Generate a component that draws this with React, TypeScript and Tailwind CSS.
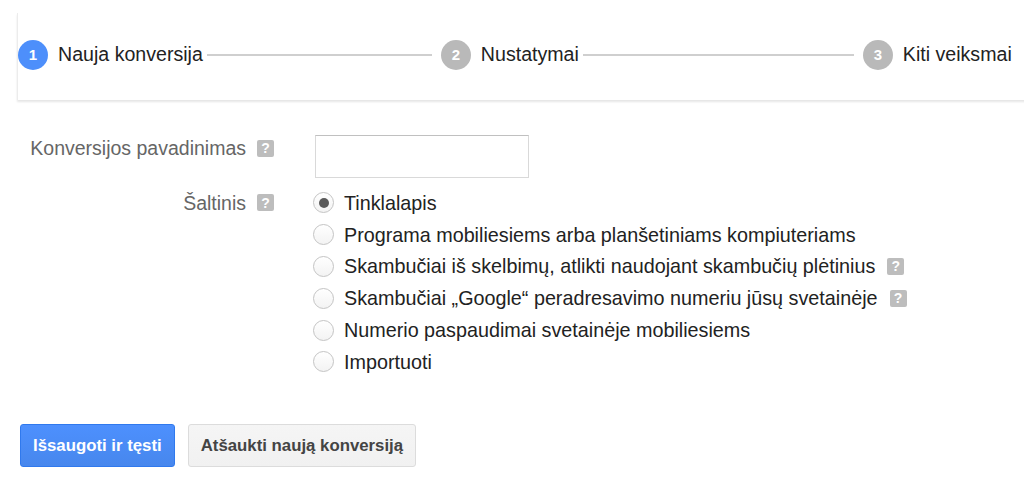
import React from "react";

const font = { fontFamily: '"Liberation Sans", Arial, sans-serif' };

function Help() {
  return (
    <span className="inline-flex h-[17px] w-[17px] shrink-0 items-center justify-center rounded-[2px] bg-[#bdbdbd] text-[14px] font-bold leading-none text-white">
      ?
    </span>
  );
}

function Step({ n, label, active }: { n: number; label: string; active?: boolean }) {
  return (
    <div className="flex shrink-0 items-center">
      <span
        className={
          "flex h-[30px] w-[30px] items-center justify-center rounded-full text-[15px] font-bold text-white " +
          (active ? "bg-[#4d8ffb]" : "bg-[#b9b9b9]")
        }
      >
        {n}
      </span>
      <span className="ml-[10px] whitespace-nowrap text-[19.6px] text-[#222]">{label}</span>
    </div>
  );
}

function Line({ w }: { w: string }) {
  return <div className={"ml-[4px] mr-[9px] h-[2px] shrink-0 bg-[#cfcfcf] " + w} />;
}

const sources = [
  { label: "Tinklalapis", checked: true },
  { label: "Programa mobiliesiems arba planšetiniams kompiuteriams" },
  { label: "Skambučiai iš skelbimų, atlikti naudojant skambučių plėtinius", help: true },
  { label: "Skambučiai „Google“ peradresavimo numeriu jūsų svetainėje", help: true },
  { label: "Numerio paspaudimai svetainėje mobiliesiems" },
  { label: "Importuoti" },
];

function Radio({ checked }: { checked?: boolean }) {
  return (
    <span className="flex h-[21px] w-[21px] shrink-0 items-center justify-center rounded-full border border-[#c4c4c4] bg-gradient-to-b from-white to-[#f3f3f3]">
      {checked && <span className="h-[10px] w-[10px] rounded-full bg-[#5a5a5a]" />}
    </span>
  );
}

export default function App() {
  return (
    <div className="h-[495px] w-[1024px] overflow-hidden bg-white" style={font}>
      <div className="pl-[17px] pt-[13px]">
        <div className="flex h-[87px] w-[1040px] items-center border-l border-[#ececec] bg-white pb-[3px] shadow-[0_2px_2px_rgba(0,0,0,0.10)]">
          <Step n={1} label="Nauja konversija" active />
          <Line w="w-[225px]" />
          <Step n={2} label="Nustatymai" />
          <Line w="w-[271px]" />
          <Step n={3} label="Kiti veiksmai" />
        </div>
      </div>

      <div className="mt-[35px]">
        <div className="flex items-start">
          <div className="flex w-[274px] items-center justify-end gap-[11px] pt-[1px]">
            <span className="text-[19.5px] leading-[24px] text-[#666]">Konversijos pavadinimas</span>
            <Help />
          </div>
          <input
            type="text"
            className="ml-[41px] h-[43px] w-[214px] border border-[#d9d9d9] border-t-[#c0c0c0] bg-white outline-none"
          />
        </div>

        <div className="mt-[9px] flex items-start">
          <div className="flex h-[31.8px] w-[274px] items-center justify-end gap-[11px]">
            <span className="text-[19.5px] leading-[24px] text-[#666]">Šaltinis</span>
            <Help />
          </div>
          <div className="ml-[39px] flex flex-col">
            {sources.map((s) => (
              <label key={s.label} className="flex h-[31.8px] items-center">
                <Radio checked={s.checked} />
                <span className="ml-[10px] whitespace-nowrap text-[19.75px] leading-[24px] text-[#222]">
                  {s.label}
                </span>
                {s.help && (
                  <span className="ml-[12px]">
                    <Help />
                  </span>
                )}
              </label>
            ))}
          </div>
        </div>
      </div>

      <div className="mt-[46px] flex gap-[13px] pl-[20px]">
        <button className="h-[43px] rounded-[3px] border border-[#3079ed] bg-gradient-to-b from-[#4d90fe] to-[#4787ed] px-[12px] text-[16.8px] font-bold text-white">
          Išsaugoti ir tęsti
        </button>
        <button className="h-[43px] rounded-[3px] border border-[#dcdcdc] bg-gradient-to-b from-[#f5f5f5] to-[#f1f1f1] px-[12px] text-[16.8px] font-bold text-[#444]">
          Atšaukti naują konversiją
        </button>
      </div>
    </div>
  );
}
